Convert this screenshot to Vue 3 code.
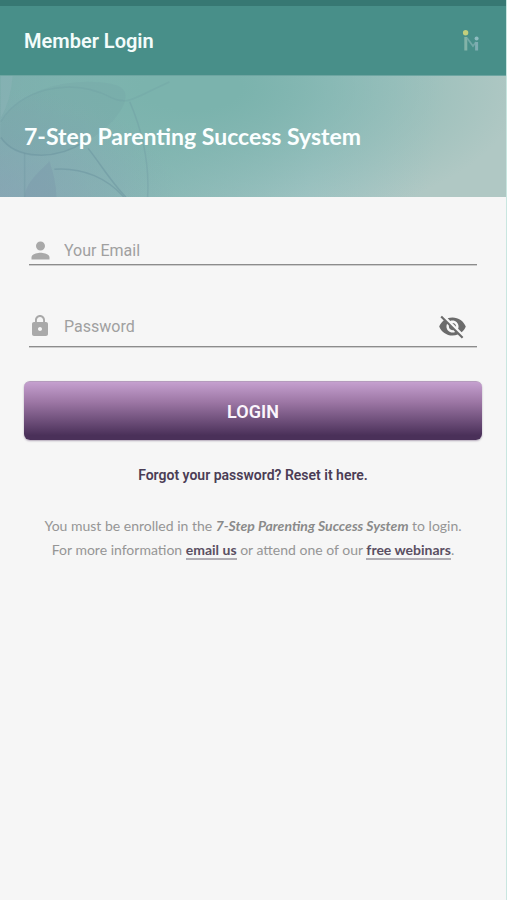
<script setup>
import { ref } from 'vue'

const email = ref('')
const password = ref('')
const showPassword = ref(false)
</script>

<template>
  <div class="screen">
    <header class="app-bar">
      <h1 class="app-title">Member Login</h1>
      <svg class="logo" viewBox="0 0 18 24" aria-hidden="true">
        <path d="M3.8 8V21.5" stroke="#83b3a8" stroke-width="3" />
        <path d="M5 9L11 17L14 13" fill="none" stroke="#73a8a6" stroke-width="1.7" />
        <path d="M14.6 13V21.5" stroke="#7fadb2" stroke-width="3" />
        <circle cx="3.6" cy="3.8" r="2.7" fill="#c3cf7c" />
        <circle cx="14.6" cy="9.6" r="2" fill="#8fbcc0" />
      </svg>
    </header>

    <section class="banner">
      <svg class="botanical" viewBox="0 0 200 122" aria-hidden="true">
        <path d="M0 0H12Q10 25 0 42Z" fill="#8bb4b7" opacity=".5" />
        <path d="M0 46C18 14 70 0 112 8C145 14 112 54 85 66C55 86 15 84 0 62Z" fill="#749fa6" opacity=".22" />
        <path d="M24 122C26 106 38 98 49 86C53 98 56 110 56 122Z" fill="#7796aa" opacity=".35" />
        <g fill="none" stroke="#668f9c" stroke-width="1.5" opacity=".16">
          <path d="M0 46C18 14 70 0 112 22C128 30 134 22 170 6" />
        </g>
        <g fill="none" stroke="#668f9c" stroke-width="1.5" opacity=".26">
          <path d="M130 26C142 54 150 88 148 122" />
          <path d="M24 78V122" />
        </g>
        <g fill="none" stroke="#668f9c" stroke-width="1.5" opacity=".42">
          <path d="M0 62C15 84 55 86 85 66" />
          <path d="M88 73C100 88 112 108 126 122" />
          <path d="M54 94C84 92 108 104 124 122" />
        </g>
      </svg>
      <h2 class="banner-title">7-Step Parenting Success System</h2>
    </section>

    <main class="content">
      <form class="form" @submit.prevent>
        <div class="field">
          <label for="email" aria-label="Your Email">
            <svg class="icon icon-person" viewBox="0 0 24 24" aria-hidden="true">
              <path d="M12 12c2.21 0 4-1.79 4-4s-1.79-4-4-4-4 1.79-4 4 1.79 4 4 4zm0 2c-2.67 0-8 1.34-8 4v2h16v-2c0-2.66-5.33-4-8-4z" />
            </svg>
          </label>
          <input id="email" v-model="email" type="email" placeholder="Your Email" autocomplete="email" />
        </div>

        <div class="field field-password">
          <label for="password" aria-label="Password">
            <svg class="icon" viewBox="0 0 24 24" aria-hidden="true">
              <path d="M18 8h-1V6c0-2.76-2.24-5-5-5S7 3.24 7 6v2H6c-1.1 0-2 .9-2 2v10c0 1.1.9 2 2 2h12c1.1 0 2-.9 2-2V10c0-1.1-.9-2-2-2zm-6 9c-1.1 0-2-.9-2-2s.9-2 2-2 2 .9 2 2-.9 2-2 2zm3.1-9H8.9V6c0-1.71 1.39-3.1 3.1-3.1 1.71 0 3.1 1.39 3.1 3.1v2z" />
            </svg>
          </label>
          <input
            id="password"
            v-model="password"
            :type="showPassword ? 'text' : 'password'"
            placeholder="Password"
            autocomplete="current-password"
          />
          <button
            class="toggle"
            type="button"
            aria-label="Show password"
            :aria-pressed="showPassword"
            @click="showPassword = !showPassword"
          >
            <svg viewBox="0 0 24 24" aria-hidden="true">
              <path d="M12 7c2.76 0 5 2.24 5 5 0 .65-.13 1.26-.36 1.83l2.92 2.92c1.51-1.26 2.7-2.89 3.43-4.75-1.73-4.39-6-7.5-11-7.5-1.4 0-2.74.25-3.98.7l2.16 2.16C10.74 7.13 11.35 7 12 7zM2 4.27l2.28 2.28.46.46C3.08 8.3 1.78 10.02 1 12c1.73 4.39 6 7.5 11 7.5 1.55 0 3.03-.3 4.38-.84l.42.42L19.73 22 21 20.73 3.27 3 2 4.27zM7.53 9.8l1.55 1.55c-.05.21-.08.43-.08.65 0 1.66 1.34 3 3 3 .22 0 .44-.03.65-.08l1.55 1.55c-.67.33-1.41.53-2.2.53-2.76 0-5-2.24-5-5 0-.79.2-1.53.53-2.2zm4.31-.78l3.15 3.15.02-.16c0-1.66-1.34-3-3-3l-.17.01z" />
            </svg>
          </button>
        </div>

        <button class="login" type="submit">LOGIN</button>
      </form>

      <a class="forgot" href="#reset">Forgot your password? Reset it here.</a>

      <p class="note">
        You must be enrolled in the <em>7-Step Parenting Success System</em> to login.<br />
        For more information <a href="#email">email us</a> or attend one of our
        <a href="#webinars">free webinars</a>.
      </p>
    </main>
  </div>
</template>

<style>
body {
  margin: 0;
  background: #f6f6f6;
}
</style>

<style scoped>
.screen {
  box-sizing: border-box;
  min-height: 100vh;
  border-right: 1px solid #c9e6e0;
  background: #f6f6f6;
  font-family: Roboto, sans-serif;
}

.app-bar {
  display: flex;
  align-items: center;
  justify-content: space-between;
  box-sizing: border-box;
  height: 75px;
  padding: 0 26px 0 24px;
  border-top: 6px solid #377873;
  background: #488f89;
}

.app-title {
  margin: 0;
  font-size: 20px;
  font-weight: 600;
  line-height: 24px;
  color: #f3fcfb;
}

.logo {
  width: 18px;
  height: 24px;
}

.banner {
  position: relative;
  display: flex;
  align-items: center;
  box-sizing: border-box;
  min-height: 122px;
  padding: 0 24px 2px;
  border-top: 1px solid #6da5a1;
  background:
    radial-gradient(ellipse 35% 90% at 0% 100%, rgba(138, 163, 182, 0.65), rgba(138, 163, 182, 0)),
    radial-gradient(ellipse 65% 120% at 38% 10%, #7bb3ad 15%, rgba(123, 179, 173, 0) 100%),
    linear-gradient(100deg, #7faaae 0%, #8cb9b7 30%, #a5c6c6 62%, #b0c8c4 85%);
}

.botanical {
  position: absolute;
  top: 0;
  left: 0;
  width: 200px;
  height: 100%;
}

.banner-title {
  position: relative;
  margin: 0;
  font-family: Lato, sans-serif;
  font-size: 23px;
  font-weight: 700;
  line-height: 32px;
  color: #fbffff;
}

.content {
  padding: 39px 24px 32px;
}

.form {
  display: flex;
  flex-direction: column;
}

.field {
  display: flex;
  align-items: center;
  gap: 13px;
  height: 28px;
  margin: 0 5px;
  border-bottom: 1px solid #8c8c8c;
  box-shadow: 0 1px 0 #cdcdcd;
}

.field-password {
  height: 40px;
  margin-top: 41px;
}

.field label {
  display: flex;
  justify-content: center;
  width: 22px;
}

.icon {
  flex: none;
  width: 24px;
  height: 24px;
  fill: #a9a9a9;
}

.icon-person {
  width: 27px;
  height: 27px;
}

.field input {
  flex: 1;
  min-width: 0;
  padding: 2px 0 0;
  border: 0;
  outline: 0;
  background: none;
  font: 400 16px/24px Roboto, sans-serif;
  color: #444;
}

.field input::placeholder {
  color: #a0a0a0;
  opacity: 1;
}

.toggle {
  display: flex;
  margin-right: 10px;
  padding: 0;
  border: 0;
  background: none;
  cursor: pointer;
}

.toggle svg {
  width: 29px;
  height: 29px;
  fill: #6b6b6b;
}

.login {
  height: 59px;
  margin-top: 34px;
  padding: 2px 0 0;
  border: 0 solid #b59bbd;
  border-top-width: 1px;
  border-radius: 6px;
  background: linear-gradient(#c5a0cf, #9c76a4 35%, #4a3059 92%);
  box-shadow: 0 1px 2px rgba(74, 48, 89, 0.4);
  font: 600 18px/24px Roboto, sans-serif;
  color: #fbf5fc;
  cursor: pointer;
}

.forgot {
  display: block;
  margin-top: 25px;
  font-size: 14px;
  font-weight: 600;
  line-height: 20px;
  text-align: center;
  text-decoration: none;
  color: #4b3d55;
}

.note {
  margin: 29px 0 0;
  font-family: Lato, sans-serif;
  font-size: 14px;
  line-height: 24px;
  text-align: center;
  color: #959595;
}

.note em {
  font-weight: 700;
  color: #8a8a8a;
}

.note a {
  border-bottom: 2px solid #b0adb3;
  font-weight: 700;
  text-decoration: none;
  color: #5a4f62;
}
</style>
